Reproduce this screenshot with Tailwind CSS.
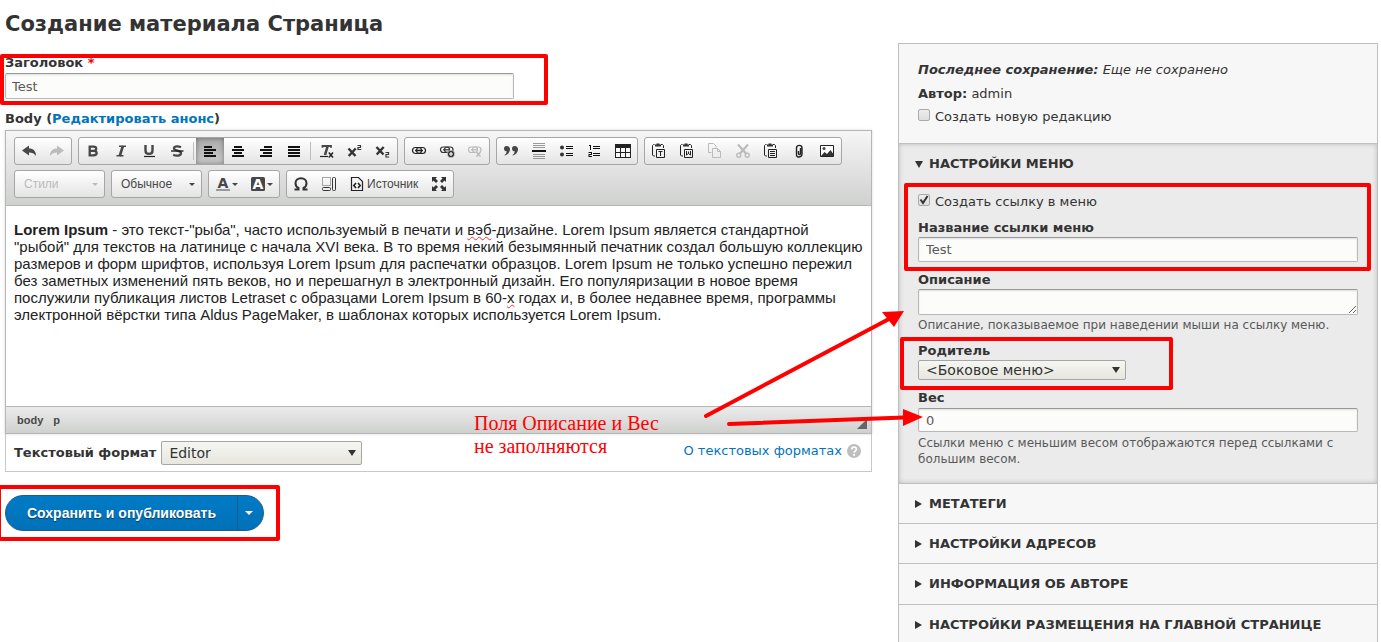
<!DOCTYPE html>
<html lang="ru">
<head>
<meta charset="utf-8">
<title>Создание материала Страница</title>
<script src="https://cdn.jsdelivr.net/npm/@tailwindcss/browser@4"></script>
</head>
<body class="relative min-h-screen overflow-hidden bg-white font-['DejaVu_Sans',sans-serif] text-[13px] leading-4 text-[#333]">
<div class="flex items-start gap-[26px] pl-[5px] pr-[3px]">

<main class="min-w-0 flex-1 pt-2">
  <h1 class="text-[21px] leading-8 font-bold">Создание материала Страница</h1>

  <div class="mt-[15px]">
    <label for="title" class="block font-bold">Заголовок <span class="text-red-600">*</span></label>
    <input id="title" type="text" value="Test" class="mt-[2px] block h-[26px] w-[509px] max-w-full rounded-xs border border-[#b8b8b8] border-t-[#999] bg-[#fcfcfa] px-[6px] text-[13px] text-[#595959] shadow-[inset_0_1px_2px_rgba(0,0,0,0.125)]">
  </div>

  <p class="mt-3 font-bold">Body (<a href="#summary" class="text-[#0074bd]">Редактировать анонс</a>)</p>

  <section class="mt-[3px] border border-[#c8c8c8] border-t-0">
    <div class="-mx-px border border-[#b6b6b6] font-['Liberation_Sans',sans-serif] shadow-[0_0_3px_rgba(0,0,0,0.15)]">
      <div class="flex flex-col gap-[5px] border-b border-[#b6b6b6] bg-linear-to-b from-[#f5f5f5] to-[#cfd1cf] px-2 pt-[6px] pb-[7px] text-[12px] text-[#474747]" role="toolbar" aria-label="Панель редактора">
        <div class="flex gap-[6px]">
          <div class="flex h-7 rounded-[3px] border border-[#a6a6a6] bg-linear-to-b from-white to-[#e4e4e4]">
            <button aria-label="Отменить" class="grid w-7 place-items-center"><svg class="size-4" viewBox="0 0 16 16" fill="#474747"><path d="M1 7.5 8 2.5v3c4.500 0 7 2.500 7 7.500C13.500 10.500 11 9.500 8 9.500v3z"/></svg></button>
            <button aria-label="Повторить" disabled class="grid w-7 place-items-center"><svg class="size-4" viewBox="0 0 16 16" fill="#bbb"><path d="M15 7.500 8 2.500v3c-4.500 0-7 2.500-7 7.500 1.500-2.500 4-3.500 7-3.500v3z"/></svg></button>
          </div>
          <div class="flex h-7 rounded-[3px] border border-[#a6a6a6] bg-linear-to-b from-white to-[#e4e4e4]">
            <button aria-label="Полужирный" class="grid w-7 place-items-center"><svg class="size-4" viewBox="0 0 16 16" fill="none" stroke="#474747" stroke-width="2.300"><path d="M4.200 3.700h4.300c3.600 0 3.600 4.100 0 4.100H4.200M8.500 7.800c4.200 0 4.200 4.600 0 4.600H4.200M4.700 2.600v10.900"/></svg></button>
            <button aria-label="Курсив" class="grid w-7 place-items-center"><svg class="size-4" viewBox="0 0 16 16" stroke="#474747" fill="none"><path d="M6 3.300h7M3.500 12.700h7" stroke-width="1.600"/><path d="M9.900 3 6.700 13" stroke-width="2.600"/></svg></button>
            <button aria-label="Подчеркнутый" class="grid w-7 place-items-center"><svg class="size-4" viewBox="0 0 16 16" stroke="#474747" fill="none"><path d="M4.500 2v5.500c0 4.500 7 4.500 7 0V2" stroke-width="2.400"/><path d="M3 13.500h11" stroke="#222" stroke-width="1.200"/></svg></button>
            <button aria-label="Зачеркнутый" class="grid w-7 place-items-center"><svg class="size-4" viewBox="0 0 16 16" stroke="#474747" fill="none"><path d="M12 4.300C9 2.700 5 3 5 5.500s7 1.700 7 4.500-4.500 3.400-7.800 1.700" stroke-width="2.300"/><path d="M2 8h12.500" stroke="#111" stroke-width="1.300"/></svg></button>
            <span class="mx-[2px] my-1 w-px bg-[#bcbcbc]"></span>
            <button aria-label="По левому краю" aria-pressed="true" class="grid w-7 place-items-center bg-linear-to-b from-[#aaa] to-[#cacaca] shadow-[inset_0_0_5px_rgba(0,0,0,0.4)]"><svg class="size-4" viewBox="0 0 16 16" fill="#111"><path d="M2 3h8v2H2zM2 6h12v2H2zM2 9h9v2H2zM2 12h12v2H2z"/></svg></button>
            <button aria-label="По центру" class="grid w-7 place-items-center"><svg class="size-4" viewBox="0 0 16 16" fill="#111"><path d="M4 3h8v2H4zM2 6h12v2H2zM4 9h8v2H4zM2 12h12v2H2z"/></svg></button>
            <button aria-label="По правому краю" class="grid w-7 place-items-center"><svg class="size-4" viewBox="0 0 16 16" fill="#111"><path d="M6 3h8v2H6zM2 6h12v2H2zM5 9h9v2H5zM2 12h12v2H2z"/></svg></button>
            <button aria-label="По ширине" class="grid w-7 place-items-center"><svg class="size-4" viewBox="0 0 16 16" fill="#111"><path d="M2 3h12v2H2zM2 6h12v2H2zM2 9h12v2H2zM2 12h12v2H2z"/></svg></button>
            <span class="mx-[2px] my-1 w-px bg-[#bcbcbc]"></span>
            <button aria-label="Убрать форматирование" class="grid w-7 place-items-center"><svg class="size-4" viewBox="0 0 16 16" stroke="#474747" fill="none"><path d="M3.500 4.800V3H12v1.800" stroke-width="1.800"/><path d="M8.700 3 6 12" stroke-width="2.600"/><path d="M1 13.500h8" stroke="#222" stroke-width="1.200"/><path d="m9.800 9.500 4.200 5m0-5-4.200 5" stroke="#222" stroke-width="1.500"/></svg></button>
            <button aria-label="Надстрочный индекс" class="grid w-7 place-items-center"><svg class="size-4" viewBox="0 0 16 16" stroke="#333" fill="none"><path d="m1.500 5.500 7 7.500m.2-7.500-7 7.500" stroke-width="2.400"/><path d="M10.500 2.500h3v2h-2.500v2h3.200" stroke-width="1.200"/></svg></button>
            <button aria-label="Подстрочный индекс" class="grid w-7 place-items-center"><svg class="size-4" viewBox="0 0 16 16" stroke="#333" fill="none"><path d="m1.500 4 7 7.500m.2-7.500-7 7.500" stroke-width="2.400"/><path d="M10.500 9.500h3v2h-2.500v2.500h3.200" stroke-width="1.200"/></svg></button>
          </div>
          <div class="flex h-7 rounded-[3px] border border-[#a6a6a6] bg-linear-to-b from-white to-[#e4e4e4]">
            <button aria-label="Вставить ссылку" class="grid w-7 place-items-center"><svg class="size-4" viewBox="0 0 16 16" stroke="#222" fill="none" stroke-width="1.200"><rect x="1.500" y="4.500" width="9" height="6" rx="3"/><rect x="5.500" y="4.500" width="9" height="6" rx="3"/><path d="M4 7.500h8" stroke-width="1.500"/></svg></button>
            <button aria-label="Добавить ссылку" class="grid w-7 place-items-center"><svg class="size-4" viewBox="0 0 16 16" stroke="#333" fill="none" stroke-width="1.200"><rect x="1.500" y="4" width="9" height="5.500" rx="2.700"/><rect x="5.500" y="4" width="8.500" height="5.500" rx="2.700"/><path d="M4 6.800h6"/><circle cx="12" cy="11" r="3.700" fill="#333" stroke="#eee" stroke-width=".6"/><path d="M12 9v4M10 11h4" stroke="#fff"/></svg></button>
            <button aria-label="Убрать ссылку" disabled class="grid w-7 place-items-center"><svg class="size-4" viewBox="0 0 16 16" stroke="#bbb" fill="none" stroke-width="1.200"><rect x="1.500" y="4" width="9" height="5.500" rx="2.700"/><rect x="5.500" y="4" width="8.500" height="5.500" rx="2.700"/><path d="M4 6.800h6"/><path d="m9.500 9 4 4.500m0-4.500-4 4.500" stroke="#eee" stroke-width="3"/><path d="m9.500 9 4 4.500m0-4.500-4 4.500" stroke-width="1.600"/></svg></button>
          </div>
          <div class="flex h-7 rounded-[3px] border border-[#a6a6a6] bg-linear-to-b from-white to-[#e4e4e4]">
            <button aria-label="Цитата" class="grid w-7 place-items-center"><svg class="size-4" viewBox="0 0 16 16" fill="#474747"><path d="M3.800 3A2.700 2.700 0 0 0 1 5.700c0 1.600 1.200 2.600 2.700 2.600-.2 1.900-1 3.100-2.500 4.200C5 12 7 9 7 6.300 7 4.300 5.700 3 3.800 3z"/><path d="M11.800 3A2.700 2.700 0 0 0 9 5.700c0 1.600 1.200 2.600 2.700 2.600-.2 1.900-1 3.100-2.500 4.200C13 12 15 9 15 6.300 15 4.300 13.700 3 11.800 3z"/></svg></button>
            <button aria-label="Горизонтальная линия" class="grid w-7 place-items-center"><svg class="size-4" viewBox="0 0 16 16" fill="#999"><path d="M2 0h12v1H2zM2 2h12v1H2zM2 4h12v1H2zM2 11h12v1H2zM2 13h12v1H2zM2 15h12v1H2z"/><path d="M1 7h14v2H1z" fill="#111"/></svg></button>
            <button aria-label="Маркированный список" class="grid w-7 place-items-center"><svg class="size-4" viewBox="0 0 16 16" fill="#333"><circle cx="3" cy="4.500" r="2"/><circle cx="3" cy="11.500" r="2"/><path d="M7 3h7v1H7zM7 5h7v1H7zM7 10h7v1H7zM7 12h7v1H7z" fill="#111"/></svg></button>
            <button aria-label="Нумерованный список" class="grid w-7 place-items-center"><svg class="size-4" viewBox="0 0 16 16" fill="#111"><path d="M2 2h2v5H3V3H2zM1.500 9H5v3H2.500v1H5v1H1.500v-3H4v-1H1.500zM6 3h7v1H6zM6 5h7v1H6zM6 10h7v1H6zM6 12h7v1H6z"/></svg></button>
            <button aria-label="Таблица" class="grid w-7 place-items-center"><svg class="size-4" viewBox="0 0 16 16"><path d="M0 1h16v14H0z" fill="#222"/><path d="M1 5h4v4H1zM6 5h4v4H6zM11 5h4v4h-4zM1 10h4v4H1zM6 10h4v4H6zM11 10h4v4h-4z" fill="#f8f8f8"/></svg></button>
          </div>
          <div class="flex h-7 rounded-[3px] border border-[#a6a6a6] bg-linear-to-b from-white to-[#e4e4e4]">
            <button aria-label="Вставить только текст" class="grid w-7 place-items-center"><svg class="size-4" viewBox="0 0 16 16" stroke="#222" fill="none"><path d="M3.500 1.500h-1l-1 1V12l1 1H4M10 1.500h1.500l1 1V5"/><path d="M4 3.500V1.500h1.500V.500h3v1H10v2z" fill="#333" stroke="none"/><path d="M5.500 6.500h8v8h-8zM7.500 8.500h4M9.500 8.500v4.500"/></svg></button>
            <button aria-label="Вставить из Word" class="grid w-7 place-items-center"><svg class="size-4" viewBox="0 0 16 16" stroke="#222" fill="none"><path d="M3.500 1.500h-1l-1 1V12l1 1H4M10 1.500h1.500l1 1V5"/><path d="M4 3.500V1.500h1.500V.500h3v1H10v2z" fill="#333" stroke="none"/><path d="M5.500 6.500h8v8h-8zM7.500 8v4l2-1.500 2 1.500V8M9.500 8.500v2"/></svg></button>
            <button aria-label="Копировать" disabled class="grid w-7 place-items-center"><svg class="size-4" viewBox="0 0 16 16" stroke="#bbb" fill="none"><path d="M4.500 9.500h-3v-9h5l2.500 2.500V4.500"/><path d="M5.500 5.500h5l3 3v6h-8zM10.500 5.500v3h3"/></svg></button>
            <button aria-label="Вырезать" disabled class="grid w-7 place-items-center"><svg class="size-4" viewBox="0 0 16 16" stroke="#bbb" fill="none"><path d="m3 1.500 8 9M13 1.500l-8 9" stroke-width="2.200"/><circle cx="3.800" cy="12.300" r="2" stroke-width="1.400"/><circle cx="12.200" cy="12.300" r="2" stroke-width="1.400"/></svg></button>
            <button aria-label="Вставить" class="grid w-7 place-items-center"><svg class="size-4" viewBox="0 0 16 16" stroke="#222" fill="none"><path d="M3.500 1.500h-1l-1 1V12l1 1H4M10 1.500h1.500l1 1V5"/><path d="M4 3.500V1.500h1.500V.500h3v1H10v2z" fill="#333" stroke="none"/><path d="M5.500 6.500h8v8h-8zM7 8.500h5M7 10.500h5M7 12.500h5"/></svg></button>
            <button aria-label="Прикрепить файл" class="grid w-7 place-items-center"><svg class="size-4" viewBox="0 0 16 16" stroke="#222" fill="none" stroke-width="1.400"><path d="M9.500 5v5.500c0 1.300-2 1.300-2 0V8M5.500 9.500V5c0-3.500 5.500-3.500 5.500 0v6c0 3.800-5.500 3.800-5.500 1V6"/></svg></button>
            <button aria-label="Изображение" class="grid w-7 place-items-center"><svg class="size-4" viewBox="0 0 16 16"><path d="M1.500 2.500h13v11h-13z" fill="#fff" stroke="#222"/><path d="m2 13 3.500-4L8 11l3.500-4L14 10.500V13z" fill="#333"/><circle cx="5" cy="5.500" r="1.500" fill="#444"/></svg></button>
          </div>
        </div>
        <div class="flex gap-[6px]">
          <button disabled class="flex h-7 w-[91px] items-center justify-between rounded-[3px] border border-[#a6a6a6] bg-linear-to-b from-white to-[#e4e4e4] pr-[6px] pl-[9px] text-[#bbb]">Стили<span class="border-x-3 border-t-3 border-x-transparent border-t-[#bbb]"></span></button>
          <button class="flex h-7 w-[91px] items-center justify-between rounded-[3px] border border-[#a6a6a6] bg-linear-to-b from-white to-[#e4e4e4] pr-[6px] pl-[9px]">Обычное<span class="border-x-3 border-t-3 border-x-transparent border-t-[#474747]"></span></button>
          <div class="flex h-7 rounded-[3px] border border-[#a6a6a6] bg-linear-to-b from-white to-[#e4e4e4]">
            <button aria-label="Цвет текста" class="flex w-[35px] items-center gap-px pl-[6px]"><svg class="size-4" viewBox="0 0 16 16" fill="#474747"><text x="8" y="12" text-anchor="middle" font-family="DejaVu Sans" font-weight="bold" font-size="14">A</text><path d="M1 13h14v2H1z" fill="#999"/></svg><span class="border-x-3 border-t-3 border-x-transparent border-t-[#474747]"></span></button>
            <button aria-label="Цвет фона" class="flex w-[35px] items-center gap-px pl-[6px]"><svg class="size-4" viewBox="0 0 16 16"><rect x="1" y="1" width="14" height="14" rx="1.500" fill="#474747"/><text x="8" y="13" text-anchor="middle" font-family="DejaVu Sans" font-weight="bold" font-size="14" fill="#fff">A</text></svg><span class="border-x-3 border-t-3 border-x-transparent border-t-[#474747]"></span></button>
          </div>
          <div class="flex h-7 rounded-[3px] border border-[#a6a6a6] bg-linear-to-b from-white to-[#e4e4e4]">
            <button aria-label="Специальный символ" class="grid w-7 place-items-center"><svg class="size-4" viewBox="0 0 16 16" fill="none" stroke="#333" stroke-width="2"><path d="M1.500 13.500h4v-1.500C3.500 11 2.500 9.300 2.500 7.200 2.500 4.200 5 2.200 8 2.200s5.500 2 5.500 5c0 2.100-1 3.800-3 4.800v1.500h4"/></svg></button>
            <button aria-label="Показать блоки" class="grid w-7 place-items-center"><svg class="size-4" viewBox="0 0 16 16" fill="none" stroke="#333"><path d="M1.500 1.500h8v8h-8z" stroke-dasharray="1 1" stroke="#555"/><rect x="11.500" y="1.500" width="3" height="13" rx="1"/><rect x="1.500" y="11.500" width="8" height="3" rx="1"/></svg></button>
            <button class="flex w-[82px] items-center gap-[2px] pl-[6px]"><svg class="size-4" viewBox="0 0 16 16" fill="none" stroke="#222"><path d="M2.500 1.500h7l4 4v9h-11z" stroke-width="1.200"/><path d="m7 7-2.200 2.500L7 12M9 7l2.200 2.500L9 12" stroke-width="1.600"/></svg>Источник</button>
            <button aria-label="Развернуть" class="grid w-7 place-items-center"><svg class="size-4" viewBox="0 0 16 16" fill="#333"><path d="M1 1h5L4.500 2.500 7 5 5 7 2.500 4.500 1 6zM15 1v5l-1.500-1.500L11 7 9 5l2.500-2.500L10 1zM1 15v-5l1.500 1.500L5 9l2 2-2.500 2.500L6 15zM15 15h-5l1.500-1.500L9 11l2-2 2.500 2.500L15 10z"/></svg></button>
          </div>
        </div>
      </div>
      <div class="h-[200px] bg-white px-2 pt-[15px] text-[15px] leading-[17px] text-[#222]" contenteditable="true" spellcheck="false" role="textbox" aria-label="Body"><p><strong>Lorem Ipsum</strong> - это текст-"рыба", часто используемый в печати и <span class="underline decoration-red-500 decoration-wavy decoration-1 underline-offset-1">вэб</span>-дизайне. Lorem Ipsum является стандартной "рыбой" для текстов на латинице с начала XVI века. В то время некий безымянный печатник создал большую коллекцию размеров и форм шрифтов, используя Lorem Ipsum для распечатки образцов. Lorem Ipsum не только успешно пережил без заметных изменений пять веков, но и перешагнул в электронный дизайн. Его популяризации в новое время послужили публикация листов Letraset с образцами Lorem Ipsum в 60-<span class="underline decoration-red-500 decoration-wavy decoration-1 underline-offset-1">х</span> годах и, в более недавнее время, программы электронной вёрстки типа Aldus PageMaker, в шаблонах которых используется Lorem Ipsum.</p></div>
      <div class="flex h-[27px] items-center gap-[10px] border-t border-[#b6b6b6] bg-linear-to-b from-[#ebebeb] to-[#cfd1cf] pr-1 pl-[11px] text-[11px] font-bold text-[#484848]">
        <span>body</span><span>p</span>
        <svg class="mt-2 ml-auto h-[10px] w-[10px]" viewBox="0 0 10 10" fill="#666"><path d="M10 0v10H0z"/></svg>
      </div>
    </div>
    <div class="flex h-[37px] items-center pr-[10px] pl-2">
      <label for="format" class="font-bold">Текстовый формат</label>
      <div class="relative ml-[5px]">
        <select id="format" class="block h-6 w-[201px] appearance-none rounded-xs border border-[#a6a6a6] bg-linear-to-b from-[#f6f6f3] to-[#e7e7df] px-[7px] text-[14px] leading-5"><option>Editor</option></select>
        <span class="pointer-events-none absolute top-[9px] right-[6px] border-x-4 border-t-6 border-x-transparent border-t-[#333]"></span>
      </div>
      <a href="#formats" class="mb-1 ml-auto flex items-center gap-[5px] text-[#0074bd]">О текстовых форматах <svg class="size-[14px]" viewBox="0 0 14 14"><circle cx="7" cy="7" r="7" fill="#bebebe"/><path d="M4.800 5.400c0-3 4.600-2.800 4.600-.2C9.400 7 7.100 6.800 7.100 8.800" fill="none" stroke="#fff" stroke-width="1.700"/><circle cx="7.100" cy="10.800" r="1.100" fill="#fff"/></svg></a>
    </div>
  </section>

  <div class="mt-[23px] flex h-9 w-[259px] overflow-hidden rounded-full border border-[#1e5c90] bg-linear-to-b from-[#007bc6] to-[#0071b8] font-['Liberation_Sans',sans-serif] text-white">
    <button class="flex-1 border-r border-[#1e5c90] text-[14px] font-bold [text-shadow:0_1px_1px_rgba(0,0,0,0.5)]">Сохранить и опубликовать</button>
    <button aria-label="Другие действия" class="flex w-[25px] items-center pl-[7px]"><span class="border-x-4 border-t-4 border-x-transparent border-t-white"></span></button>
  </div>
</main>

<aside class="mt-[43px] h-[620px] w-[480px] border border-[#bfbfbf] bg-[#f7f7f7]">
  <div class="px-[19px] pt-[18px] pb-[18px] leading-4">
    <p class="italic"><strong>Последнее сохранение:</strong> Еще не сохранено</p>
    <p class="mt-2"><strong>Автор:</strong> admin</p>
    <label class="mt-[7px] flex items-start gap-[5px]"><input type="checkbox" class="size-3 appearance-none rounded-xs border border-[#aaa] bg-linear-to-b from-[#ededed] to-[#dedede]"><span>Создать новую редакцию</span></label>
  </div>

  <details open class="border-t border-[#bfbfbf] bg-[#ebebeb] shadow-[inset_0_0_5px_rgba(0,0,0,0.2)]">
    <summary class="flex h-10 list-none items-center pl-4 font-bold uppercase"><svg class="mr-[6px] size-2" viewBox="0 0 8 8" fill="#333"><path d="M0 1h8L4 8z"/></svg>Настройки меню</summary>
    <div class="px-[19px] pt-[10px] pb-4">
      <label class="flex items-start gap-[5px]"><span class="relative"><input type="checkbox" checked class="block size-3 appearance-none rounded-xs border border-[#aaa] bg-linear-to-b from-[#ededed] to-[#dedede]"><svg class="pointer-events-none absolute inset-0 size-3" viewBox="0 0 12 12" fill="none" stroke="#333" stroke-width="2"><path d="m2.500 5.500 2.500 3.500 4.500-7"/></svg></span><span>Создать ссылку в меню</span></label>
      <label for="link" class="mt-[10px] block font-bold">Название ссылки меню</label>
      <input id="link" type="text" value="Test" class="mt-px block h-[25px] w-full rounded-xs border border-[#b8b8b8] border-t-[#999] bg-[#fcfcfa] px-[7px] text-[13px] text-[#595959] shadow-[inset_0_1px_2px_rgba(0,0,0,0.125)]">
      <label for="desc" class="mt-[10px] block font-bold">Описание</label>
      <textarea id="desc" rows="1" class="mt-px block h-[26px] w-full rounded-xs border border-[#b8b8b8] border-t-[#999] bg-[#fcfcfa] px-[7px] shadow-[inset_0_1px_2px_rgba(0,0,0,0.125)]"></textarea>
      <p class="mt-[2px] text-[12px] text-[#595959]">Описание, показываемое при наведении мыши на ссылку меню.</p>
      <label for="parent" class="mt-[10px] block font-bold">Родитель</label>
      <div class="relative mt-px w-[208px]">
        <select id="parent" class="block h-5 w-full appearance-none rounded-xs border border-[#a6a6a6] bg-linear-to-b from-[#f6f6f3] to-[#e7e7df] px-[7px] text-[14px] leading-[18px]"><option>&lt;Боковое меню&gt;</option></select>
        <span class="pointer-events-none absolute top-[7px] right-[6px] border-x-4 border-t-6 border-x-transparent border-t-[#333]"></span>
      </div>
      <label for="weight" class="mt-[10px] block font-bold">Вес</label>
      <input id="weight" type="text" value="0" class="mt-[2px] block h-6 w-full rounded-xs border border-[#b8b8b8] border-t-[#999] bg-[#fcfcfa] px-[7px] text-[13px] text-[#595959] shadow-[inset_0_1px_2px_rgba(0,0,0,0.125)]">
      <p class="mt-[3px] text-[12px] text-[#595959]">Ссылки меню с меньшим весом отображаются перед ссылками с большим весом.</p>
    </div>
  </details>
  <details class="border-t border-[#bfbfbf]"><summary class="flex h-[39px] list-none items-center pl-4 font-bold uppercase"><svg class="mr-[6px] size-2" viewBox="0 0 8 8" fill="#333"><path d="M0 0v8l7-4z"/></svg>Метатеги</summary></details>
  <details class="border-t border-[#bfbfbf]"><summary class="flex h-[39px] list-none items-center pl-4 font-bold uppercase"><svg class="mr-[6px] size-2" viewBox="0 0 8 8" fill="#333"><path d="M0 0v8l7-4z"/></svg>Настройки адресов</summary></details>
  <details class="border-t border-[#bfbfbf]"><summary class="flex h-10 list-none items-center pl-4 font-bold uppercase"><svg class="mr-[6px] size-2" viewBox="0 0 8 8" fill="#333"><path d="M0 0v8l7-4z"/></svg>Информация об авторе</summary></details>
  <details class="border-t border-[#bfbfbf]"><summary class="flex h-10 list-none items-center pl-4 font-bold uppercase"><svg class="mr-[6px] size-2" viewBox="0 0 8 8" fill="#333"><path d="M0 0v8l7-4z"/></svg>Настройки размещения на главной странице</summary></details>
</aside>
</div>

<!-- Annotations over the form -->
<div class="pointer-events-none absolute top-[54px] left-0 h-[51px] w-[548px] rounded-xs border-4 border-[#f00]"></div>
<div class="pointer-events-none absolute top-[485px] -left-[3px] h-14 w-[283px] rounded-xs border-4 border-[#f00]"></div>
<div class="pointer-events-none absolute top-[183px] left-[904px] h-22 w-[467px] rounded-xs border-4 border-[#f00]"></div>
<div class="pointer-events-none absolute top-[337px] left-[900px] h-[53px] w-[273px] rounded-xs border-4 border-[#f00]"></div>
<p class="pointer-events-none absolute top-[412px] left-[474px] font-['Liberation_Serif',serif] text-[20px] leading-[23px] text-[#f00]">Поля Описание и Вес<br>не заполняются</p>
<svg class="pointer-events-none absolute top-[300px] left-[700px] h-[130px] w-[230px]" viewBox="700 300 230 130" fill="#f00" stroke="#f00" stroke-linecap="round"><path d="M706 416 889 319M729 424 904 417.500" stroke-width="4"/><path d="m904 311-22 1 12 15zM923 417l-20-8v17z" stroke="none"/></svg>
</body>
</html>
